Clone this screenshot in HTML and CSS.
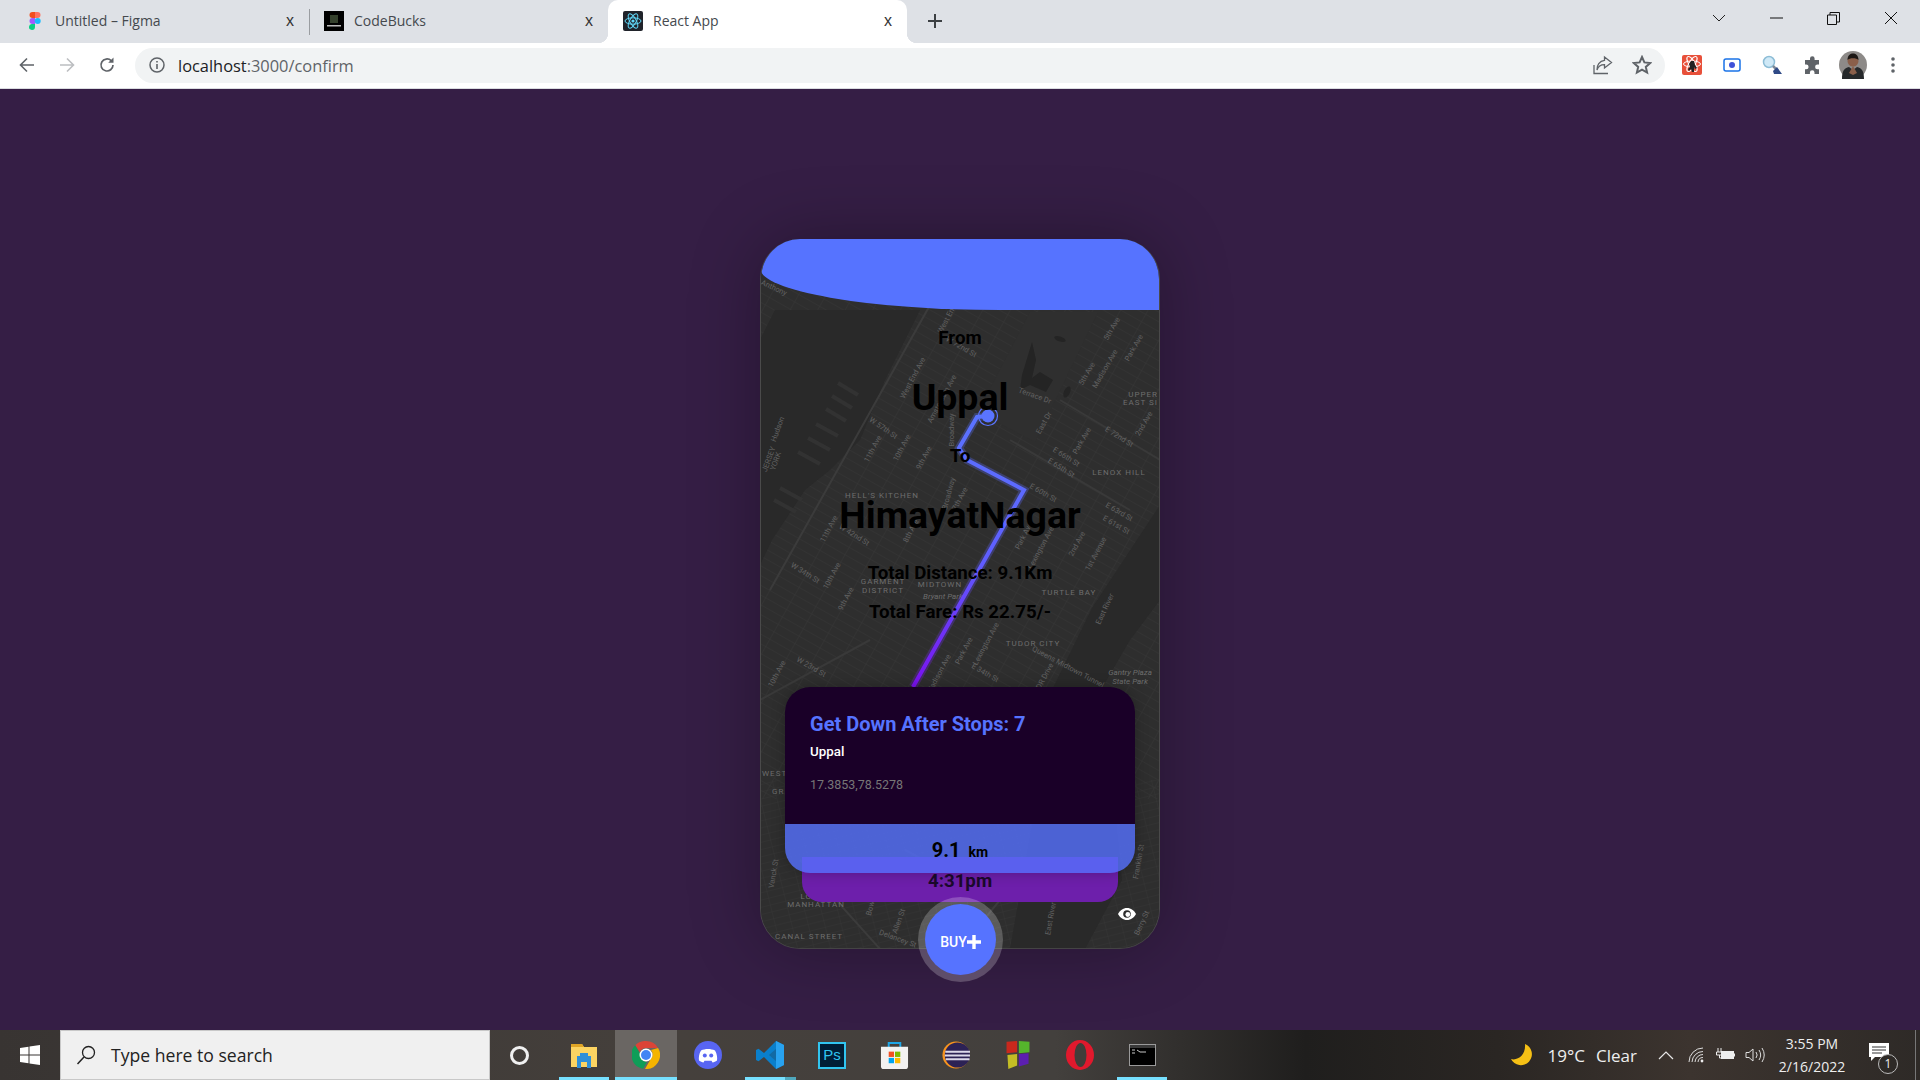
FILE: index.html
```html
<!DOCTYPE html>
<html lang="en">
<head>
    <meta charset="UTF-8">
    <title>React App</title>
    <link rel="stylesheet" href="styles.css">
</head>
<body>

    <div class="tabstrip">
        <div class="tab">
            <svg class="tab-icon" viewBox="0 0 20 20">
                <path fill="#f24e1e" d="M10 1H7.5a3 3 0 0 0 0 6H10z"/>
                <path fill="#ff7262" d="M10 1h2.5a3 3 0 0 1 0 6H10z"/>
                <path fill="#a259ff" d="M10 7H7.5a3 3 0 0 0 0 6H10z"/>
                <circle fill="#1abcfe" cx="12.7" cy="10" r="3"/>
                <path fill="#0acf83" d="M10 13H7.5a3 3 0 1 0 2.5 3z"/>
            </svg>
            <span class="tab-title">Untitled – Figma</span>
            <span class="tab-close">x</span>
        </div>
        <div class="tab tab-sep">
            <svg class="tab-icon" viewBox="0 0 20 20">
                <rect width="20" height="20" fill="#000"/>
                <rect x="6" y="4" width="8" height="8" fill="#34402c"/>
                <rect x="3" y="14" width="14" height="1.5" fill="#bbb"/>
            </svg>
            <span class="tab-title">CodeBucks</span>
            <span class="tab-close">x</span>
        </div>
        <div class="tab tab-active">
            <svg class="tab-icon" viewBox="0 0 20 20">
                <rect width="20" height="20" rx="2" fill="#20232a"/>
                <g fill="none" stroke="#61dafb" stroke-width="1">
                    <ellipse cx="10" cy="10" rx="8" ry="3.2"/>
                    <ellipse cx="10" cy="10" rx="8" ry="3.2" transform="rotate(60 10 10)"/>
                    <ellipse cx="10" cy="10" rx="8" ry="3.2" transform="rotate(120 10 10)"/>
                </g>
                <circle cx="10" cy="10" r="1.6" fill="#61dafb"/>
            </svg>
            <span class="tab-title">React App</span>
            <span class="tab-close">x</span>
        </div>
        <svg class="new-tab" viewBox="0 0 14 14"><path d="M7 0v14M0 7h14" stroke="#3c4043" stroke-width="2"/></svg>

        <div class="window-controls">
            <div class="window-btn"><svg width="14" height="8" viewBox="0 0 14 8"><path d="M1 1l6 6 6-6" fill="none" stroke="#222"/></svg></div>
            <div class="window-btn"><svg width="13" height="2" viewBox="0 0 13 2"><path d="M0 1h13" stroke="#111"/></svg></div>
            <div class="window-btn"><svg width="13" height="13" viewBox="0 0 13 13"><path d="M.5 3h9v9.5h-9zM3 3V.5h9.5V10H10" fill="none" stroke="#111"/></svg></div>
            <div class="window-btn"><svg width="14" height="14" viewBox="0 0 14 14"><path d="M1 1l12 12M13 1L1 13" stroke="#111"/></svg></div>
        </div>
    </div>

    <div class="toolbar">
        <div class="nav-btn">
            <svg width="16" height="16" viewBox="0 0 16 16"><path d="M15 8H2M8 1.5L1.5 8 8 14.5" fill="none" stroke="#5f6368" stroke-width="1.6"/></svg>
        </div>
        <div class="nav-btn">
            <svg width="16" height="16" viewBox="0 0 16 16"><path d="M1 8h13M8 1.5L14.5 8 8 14.5" fill="none" stroke="#bcbec1" stroke-width="1.6"/></svg>
        </div>
        <div class="nav-btn">
            <svg width="18" height="18" viewBox="0 0 18 18"><path d="M15 9a6 6 0 1 1-1.8-4.3" fill="none" stroke="#5f6368" stroke-width="1.7"/><path d="M15.5 1.5v5.3h-5.300z" fill="#5f6368"/></svg>
        </div>

        <div class="omnibox">
            <svg class="info-icon" width="18" height="18" viewBox="0 0 18 18"><circle cx="9" cy="9" r="7" fill="none" stroke="#5f6368" stroke-width="1.5"/><path d="M9 8v5M9 5v1.6" stroke="#5f6368" stroke-width="1.6"/></svg>
            <span class="url">localhost<span class="url-path">:3000/confirm</span></span>
            <svg class="share-icon" width="20" height="20" viewBox="0 0 20 20"><path d="M1 10v8.5h14M11.5 2l7 5.5-7 5.5v-3.300C7 9.700 5 11.800 4 15c-.3-5 2.500-9 7.500-9.600z" fill="none" stroke="#5f6368" stroke-width="1.3"/></svg>
            <svg class="star-icon" width="20" height="20" viewBox="0 0 20 20"><path d="M10 2l2.4 5.4 5.8.6-4.4 3.900 1.300 5.700L10 14.700l-5.100 2.900 1.300-5.700L1.800 8l5.800-.6z" fill="none" stroke="#5f6368" stroke-width="2"/></svg>
        </div>

        <div class="ext-btn">
            <svg width="20" height="20" viewBox="0 0 20 20">
                <rect width="20" height="20" rx="2" fill="#e8503a"/>
                <g fill="none" stroke="#fff" stroke-width="1">
                    <ellipse cx="10" cy="9" rx="8.5" ry="3"/>
                    <ellipse cx="10" cy="9" rx="8.5" ry="3" transform="rotate(60 10 9)"/>
                    <ellipse cx="10" cy="9" rx="8.5" ry="3" transform="rotate(120 10 9)"/>
                </g>
                <path d="M9 6h3l1 4 2 3-2 1-1-2v5h-2l-1-3-2 2-1-2 2-2-1-3z" fill="#222"/>
            </svg>
        </div>
        <div class="ext-btn">
            <svg width="18" height="14" viewBox="0 0 18 14"><rect x="1" y="1" width="16" height="12" rx="2" fill="#fff" stroke="#1a73e8" stroke-width="1.5"/><circle cx="9" cy="7" r="3" fill="#3f51d8"/></svg>
        </div>
        <div class="ext-btn">
            <svg width="20" height="20" viewBox="0 0 20 20"><circle cx="7" cy="7" r="5.5" fill="#cfe9f7" stroke="#8dbdd6" stroke-width="1.5"/><path d="M11 11l3 3" stroke="#7d8a99" stroke-width="2.5"/><path d="M11 16l4-4 5 7-8 0z" fill="#2f4a86"/></svg>
        </div>
        <div class="ext-btn">
            <svg width="19" height="19" viewBox="0 0 19 19"><path d="M7 2.5a2.3 2.3 0 0 1 4.6 0V4H16v4.5h-1.5a2.4 2.4 0 0 0 0 4.8H16V18h-4.5v-1.5a2.3 2.3 0 0 0-4.6 0V18H2v-4.7h1.2a2.4 2.4 0 0 0 0-4.8H2V4h5z" fill="#5f6368"/></svg>
        </div>
        <div class="ext-btn">
            <svg width="28" height="28" viewBox="0 0 28 28">
                <circle cx="14" cy="14" r="14" fill="#8d8a88"/>
                <path d="M3 28c0-8 2-11 7-12l4 3 4-3c5 1 7 4 7 12z" fill="#26292b"/>
                <circle cx="14" cy="10" r="5.5" fill="#8a5f4a"/>
                <path d="M8.5 9c0-5 3-6.5 5.5-6.5S19.5 4 19.5 9c-2-2.5-9-2.5-11 0z" fill="#1c1715"/>
                <path d="M10 22l4-7 4 7-4 2z" fill="#8a5f4a"/>
            </svg>
        </div>
        <div class="ext-btn">
            <svg width="4" height="16" viewBox="0 0 4 16"><circle cx="2" cy="2" r="1.8" fill="#5f6368"/><circle cx="2" cy="8" r="1.8" fill="#5f6368"/><circle cx="2" cy="14" r="1.8" fill="#5f6368"/></svg>
        </div>
    </div>

    <main class="page">
        <div class="phone">
            <div class="screen">
                <svg class="map" viewBox="760 239 400 710">
                    <defs>
                        <pattern id="midtown-grid" width="24" height="8.5" patternUnits="userSpaceOnUse" patternTransform="rotate(29.4)">
                            <path d="M0 0H24M0 0V8.5" stroke="#373737" stroke-width="1" fill="none"/>
                        </pattern>
                        <pattern id="lower-grid" width="16" height="7" patternUnits="userSpaceOnUse" patternTransform="rotate(-14)">
                            <path d="M0 0H16M0 0V7" stroke="#363636" stroke-width="1" fill="none"/>
                        </pattern>
                        <linearGradient id="route-fade" gradientUnits="userSpaceOnUse" x1="988" y1="416" x2="913" y2="687">
                            <stop offset="0" stop-color="#5a74ff"/>
                            <stop offset="0.5" stop-color="#5f5dff"/>
                            <stop offset="1" stop-color="#7a10f0"/>
                        </linearGradient>
                    </defs>

                    <rect x="760" y="239" width="400" height="710" fill="#2e2e2e"/>
                    <rect x="760" y="239" width="400" height="560" fill="url(#midtown-grid)"/>
                    <rect x="760" y="780" width="400" height="170" fill="url(#lower-grid)"/>

                    <!-- water -->
                    <path d="M775 310L920 310 885 380 860 440 830 470 805 490 772 540 760 565V340z" fill="#292929"/>
                    <path d="M1160 505L1092 608 1052 690 1040 780 1010 949H1085L1122 880 1112 780 1092 705 1130 640 1160 600z" fill="#292929"/>

                    <!-- park -->
                    <path d="M1030 312H1098L1035 442 978 412z" fill="#2f2f2f"/>
                    <path d="M1022 375L1032 342 1036 360 1032 378 1040 372 1053 380 1046 392 1030 385 1020 390z" fill="#242424"/>
                    <ellipse cx="1067" cy="392" rx="3" ry="6" fill="#242424" transform="rotate(25 1067 392)"/>
                    <ellipse cx="1060" cy="339" rx="6" ry="2.5" fill="#242424" transform="rotate(20 1060 339)"/>

                    <!-- piers -->
                    <path d="M858 395l-20-12M852 408l-20-12M846 421l-20-12M838 436l-22-12M830 450l-22-12M820 464l-22-12" stroke="#323232" stroke-width="4"/>
                    <path d="M802 500l-22-12M796 512l-22-12" stroke="#323232" stroke-width="4"/>

                    <!-- main roads -->
                    <path d="M930 305L860 430 770 590" stroke="#3b3b3b" stroke-width="2" fill="none"/>
                    <path d="M1060 400L1160 460M1010 440L1130 510M870 640L760 700" stroke="#393939" stroke-width="2" fill="none"/>
                    <path d="M905 850L1000 900 960 949M800 860L880 949" stroke="#3b3b3b" stroke-width="2" fill="none"/>

                    <g class="map-areas">
                        <text x="882" y="498" text-anchor="middle">HELL'S KITCHEN</text>
                        <text x="883" y="584" text-anchor="middle">GARMENT</text>
                        <text x="883" y="593" text-anchor="middle">DISTRICT</text>
                        <text x="940" y="587" text-anchor="middle">MIDTOWN</text>
                        <text x="1069" y="595" text-anchor="middle">TURTLE BAY</text>
                        <text x="1033" y="646" text-anchor="middle">TUDOR CITY</text>
                        <text x="1119" y="475" text-anchor="middle">LENOX HILL</text>
                        <text x="1158" y="397" text-anchor="end">UPPER</text>
                        <text x="1158" y="405" text-anchor="end">EAST SI</text>
                        <text x="816" y="899" text-anchor="middle">LOWER</text>
                        <text x="816" y="907" text-anchor="middle">MANHATTAN</text>
                        <text x="775" y="939">CANAL STREET</text>
                        <text x="762" y="776">WEST</text>
                        <text x="772" y="794">GR</text>
                    </g>

                    <g class="map-streets" text-anchor="middle">
                        <text transform="translate(773 290) rotate(25)">Anthony</text>
                        <text transform="translate(780 430) rotate(-70)">Hudson</text>
                        <text transform="translate(771 460) rotate(-70)">JERSEY</text>
                        <text transform="translate(778 462) rotate(-70)">YORK</text>
                        <text transform="translate(882 430) rotate(35)">W 57th St</text>
                        <text transform="translate(875 450) rotate(-62)">11th Ave</text>
                        <text transform="translate(904 449) rotate(-62)">10th Ave</text>
                        <text transform="translate(926 459) rotate(-62)">9th Ave</text>
                        <text transform="translate(915 379) rotate(-62)">West End Ave</text>
                        <text transform="translate(944 400) rotate(-62)">Amsterdam Ave</text>
                        <text transform="translate(949 320) rotate(-62)">West End</text>
                        <text transform="translate(960 349) rotate(30)">W 72nd St</text>
                        <text transform="translate(1034 398) rotate(20)">Terrace Dr</text>
                        <text transform="translate(1046 424) rotate(-60)">East Dr</text>
                        <text transform="translate(1084 442) rotate(-60)">Park Ave</text>
                        <text transform="translate(1065 459) rotate(32)">E 66th St</text>
                        <text transform="translate(1060 470) rotate(32)">E 65th St</text>
                        <text transform="translate(1118 439) rotate(32)">E 72nd St</text>
                        <text transform="translate(1146 425) rotate(-60)">2nd Ave</text>
                        <text transform="translate(1136 349) rotate(-60)">Park Ave</text>
                        <text transform="translate(1107 370) rotate(-60)">Madison Ave</text>
                        <text transform="translate(1114 330) rotate(-60)">5th Ave</text>
                        <text transform="translate(1089 375) rotate(-60)">5th Ave</text>
                        <text transform="translate(954 430) rotate(-90)">Broadway</text>
                        <text transform="translate(831 530) rotate(-62)">11th Ave</text>
                        <text transform="translate(853 537) rotate(32)">W 42nd St</text>
                        <text transform="translate(834 577) rotate(-62)">10th Ave</text>
                        <text transform="translate(804 575) rotate(32)">W 34th St</text>
                        <text transform="translate(848 600) rotate(-62)">9th Ave</text>
                        <text transform="translate(913 532) rotate(-62)">8th Ave</text>
                        <text transform="translate(951 494) rotate(-75)">Broadway</text>
                        <text transform="translate(962 500) rotate(-62)">7th Ave</text>
                        <text transform="translate(1042 495) rotate(30)">E 60th St</text>
                        <text transform="translate(1118 514) rotate(30)">E 63rd St</text>
                        <text transform="translate(1115 527) rotate(30)">E 61st St</text>
                        <text transform="translate(1079 545) rotate(-62)">2nd Ave</text>
                        <text transform="translate(1098 555) rotate(-62)">1st Avenue</text>
                        <text transform="translate(1026 537) rotate(-62)">Park Ave</text>
                        <text transform="translate(1043 549) rotate(-62)">Lexington Ave</text>
                        <text transform="translate(966 652) rotate(-62)">Park Ave</text>
                        <text transform="translate(988 645) rotate(-62)">Lexington Ave</text>
                        <text transform="translate(941 675) rotate(-62)">Madison Ave</text>
                        <text transform="translate(984 675) rotate(30)">E 34th St</text>
                        <text transform="translate(779 675) rotate(-62)">10th Ave</text>
                        <text transform="translate(810 669) rotate(30)">W 23rd St</text>
                        <text transform="translate(1067 669) rotate(28)">Queens Midtown Tunnel</text>
                        <text transform="translate(1046 679) rotate(-62)">FDR Drive</text>
                        <text transform="translate(776 874) rotate(-80)">Vanck St</text>
                        <text transform="translate(874 904) rotate(-75)">Bowery</text>
                        <text transform="translate(901 922) rotate(-70)">Allen St</text>
                        <text transform="translate(897 941) rotate(20)">Delancey St</text>
                        <text transform="translate(1053 919) rotate(-80)">East River</text>
                        <text transform="translate(1144 924) rotate(-65)">Berry St</text>
                        <text transform="translate(1141 862) rotate(-80)">Franklin St</text>
                        <text transform="translate(1107 610) rotate(-65)">East River</text>
                    </g>
                    <text class="map-italic" x="943" y="599" text-anchor="middle">Bryant Park</text>
                    <text class="map-italic" x="1130" y="675" text-anchor="middle">Gantry Plaza</text>
                    <text class="map-italic" x="1130" y="684" text-anchor="middle">State Park</text>

                    <path class="route-glow" d="M988 416L977 417 959 448 967 460 1024 490 913 687"/>
                    <path class="route-line" d="M988 416L977 417 959 448 967 460 1024 490 913 687"/>
                    <circle cx="988" cy="416" r="6.5" fill="#5a74ff"/>
                    <circle cx="988" cy="416" r="9.5" fill="none" stroke="#5a74ff" stroke-width="1.2"/>
                </svg>

                <div class="screen-top"></div>

                <section class="trip">
                    <h3 class="trip-label">From</h3>
                    <h1 class="trip-place place-from">Uppal</h1>
                    <h3 class="trip-label label-to">To</h3>
                    <h1 class="trip-place place-to">HimayatNagar</h1>
                    <h3 class="trip-label label-distance">Total Distance: 9.1Km</h3>
                    <h3 class="trip-label label-fare">Total Fare: Rs 22.75/-</h3>
                </section>

                <div class="time-card">4:31pm</div>

                <div class="stop-card">
                    <div class="stop-body">
                        <h2 class="stop-title">Get Down After Stops: 7</h2>
                        <p class="stop-name">Uppal</p>
                        <p class="stop-coords">17.3853,78.5278</p>
                    </div>
                    <div class="stop-footer">
                        <span class="stop-km">9.1</span>
                        <span class="stop-unit">km</span>
                    </div>
                </div>

                <svg class="eye" width="18" height="12" viewBox="0 0 18 12">
                    <path d="M9 0C5 0 2 2.5 0 6c2 3.5 5 6 9 6s7-2.5 9-6c-2-3.5-5-6-9-6z" fill="#fff"/>
                    <circle cx="9" cy="6" r="3.8" fill="#2d2d2d"/>
                    <circle cx="9.8" cy="6.5" r="2.4" fill="#fff"/>
                </svg>
            </div>

            <button class="buy-btn">BUY<svg width="14" height="14" viewBox="0 0 14 14"><path d="M7 0v14M0 7h14" stroke="#fff" stroke-width="3.4"/></svg></button>
        </div>
    </main>

    <div class="taskbar">
        <div class="start">
            <svg width="20" height="20" viewBox="0 0 20 20"><path fill="#fff" d="M0 3l8.5-1.2V9.5H0zM9.5 1.600L20 0v9.500H9.500zM0 10.500h8.500v7.700L0 17zM9.500 10.500H20V20L9.500 18.400z"/></svg>
        </div>
        <div class="search">
            <svg width="20" height="20" viewBox="0 0 20 20"><circle cx="12.5" cy="7.5" r="6" fill="none" stroke="#222" stroke-width="1.3"/><path d="M8 12L1.5 19" stroke="#222" stroke-width="1.5"/></svg>
            <span>Type here to search</span>
        </div>
        <div class="cortana"><span class="cortana-ring"></span></div>

        <div class="task-item task-open">
            <svg width="28" height="26" viewBox="0 0 28 26">
                <path d="M1 2h11l2 3h13v20H1z" fill="#fcd462"/>
                <path d="M1 2h11l2 3H1z" fill="#e0a526"/>
                <path d="M7 14h14v12h-4v-6h-6v6H7z" fill="#2f8fd8"/>
                <rect x="10" y="11" width="8" height="3" fill="#2f8fd8"/>
            </svg>
        </div>
        <div class="task-item task-open task-active">
            <svg width="28" height="28" viewBox="0 0 28 28">
                <path d="M14 0a14 14 0 0 1 12.1 7H14a7 7 0 0 0-6.3 4L3.2 4.2A14 14 0 0 1 14 0z" fill="#db4437"/>
                <path d="M3.2 4.2L8.8 14a6 6 0 0 0 6.2 6.9L11 27.7A14 14 0 0 1 3.2 4.2z" fill="#0f9d58"/>
                <path d="M26.1 7A14 14 0 0 1 13 28l6-10.5A6.5 6.5 0 0 0 19 9z" fill="#f4b400"/>
                <circle cx="14" cy="14" r="6.5" fill="#fff"/>
                <circle cx="14" cy="14" r="5" fill="#4285f4"/>
            </svg>
        </div>
        <div class="task-item">
            <svg width="28" height="28" viewBox="0 0 28 28">
                <circle cx="14" cy="14" r="14" fill="#5865f2"/>
                <path d="M7 9.5c4-2 10-2 14 0 2 3.5 2.5 7 2 10-1.5 1.2-3 1.700-4.500 2l-1-1.800h-7l-1 1.800c-1.500-.3-3-.8-4.500-2-.5-3 0-6.500 2-10z" fill="#fff"/>
                <circle cx="10.8" cy="14.5" r="2" fill="#5865f2"/>
                <circle cx="17.2" cy="14.5" r="2" fill="#5865f2"/>
            </svg>
        </div>
        <div class="task-item task-open task-split">
            <svg width="30" height="30" viewBox="0 0 30 30">
                <path d="M21 1l8 4v20l-8 4L9 17l-5.5 4.3L1 20V10l2.5-1.3L9 13z" fill="#0a7fcb"/>
                <path d="M21 1l8 4v20l-8 4z" fill="#28a2ef"/>
                <path d="M21 9l-7 6 7 6z" fill="#2d2d2d" fill-opacity=".25"/>
            </svg>
        </div>
        <div class="task-item">
            <div class="ps-icon">Ps</div>
        </div>
        <div class="task-item">
            <svg width="29" height="29" viewBox="0 0 30 30">
                <path d="M9 7V2h12v5" fill="none" stroke="#1ea7e8" stroke-width="2"/>
                <path d="M1 6h28v20a3 3 0 0 1-3 3H4a3 3 0 0 1-3-3z" fill="#f3f2f1"/>
                <rect x="9" y="11" width="5.5" height="5.5" fill="#f25022"/>
                <rect x="15.5" y="11" width="5.5" height="5.5" fill="#7fba00"/>
                <rect x="9" y="17.5" width="5.5" height="5.5" fill="#00a4ef"/>
                <rect x="15.5" y="17.5" width="5.5" height="5.5" fill="#ffb900"/>
            </svg>
        </div>
        <div class="task-item">
            <svg width="30" height="28" viewBox="0 0 30 30">
                <circle cx="15" cy="15" r="14.5" fill="#f7941e"/>
                <circle cx="16.5" cy="15" r="13.5" fill="#2c2255"/>
                <path d="M3.5 10.5h26.5v2H3.5zM3 14.5h27v2H3zM4 18.5h25.5v2H4z" fill="#dcd9ea"/>
            </svg>
        </div>
        <div class="task-item">
            <svg width="28" height="30" viewBox="0 0 28 34">
                <path d="M1 2l12-1v13L1 15z" fill="#c9281d"/>
                <path d="M15 1l12 1v12l-12 1z" fill="#55b52c"/>
                <path d="M2 17l11-1v13L3 33z" fill="#c3bd25"/>
                <path d="M15 16l11-1 0 12-11 3z" fill="#5c1fb0"/>
            </svg>
        </div>
        <div class="task-item">
            <svg width="28" height="30" viewBox="0 0 28 30">
                <ellipse cx="14" cy="15" rx="14" ry="15" fill="#e1192d"/>
                <ellipse cx="14.5" cy="15" rx="6" ry="12" fill="#413d3a"/>
            </svg>
        </div>
        <div class="task-item task-open">
            <svg width="27" height="22" viewBox="0 0 27 22">
                <rect x=".5" y=".5" width="26" height="21" fill="#000" stroke="#9a9a9a"/>
                <rect x="1" y="1" width="25" height="3" fill="#3a3a3a"/>
                <path d="M3 6h3M3 9h3M8 6l3 2M11 8h6" stroke="#c8c8c8"/>
            </svg>
        </div>

        <div class="tray">
            <svg class="moon" width="24" height="24" viewBox="0 0 24 24"><path d="M15 1a11 11 0 1 1-14 15c7 2 15-4 14-15z" fill="#f6c015"/></svg>
            <span class="weather-temp">19°C</span>
            <span class="weather-text">Clear</span>
            <svg class="tray-caret" width="16" height="9" viewBox="0 0 16 9"><path d="M1 8l7-7 7 7" fill="none" stroke="#e8e8e8" stroke-width="1.2"/></svg>
            <svg class="tray-wifi" width="17" height="16" viewBox="0 0 17 16"><path d="M1 15a14 14 0 0 1 14-14M4 15A11 11 0 0 1 15 4.5M7 15a8 8 0 0 1 8-7.5M10 15a5 5 0 0 1 5-4.5" fill="none" stroke="#ddd"/><circle cx="14" cy="14" r="1.4" fill="#eee"/></svg>
            <svg class="tray-power" width="20" height="14" viewBox="0 0 20 14"><path d="M3 0v4M6 0v4M1.5 4h6v3h-6zM4.5 7v3H7" stroke="#eee" fill="none"/><rect x="6" y="3" width="13" height="8" fill="#eee"/><path d="M19 5.5h1v3h-1z" fill="#eee"/></svg>
            <svg class="tray-sound" width="20" height="16" viewBox="0 0 20 16"><path d="M1 5.5h3L8 2v12L4 10.5H1z" fill="none" stroke="#ddd"/><path d="M11 5a5 5 0 0 1 0 6M14 3a9 9 0 0 1 0 10M17 1a13 13 0 0 1 0 14" fill="none" stroke="#ddd"/></svg>
            <div class="clock">
                <span>3:55 PM</span>
                <span>2/16/2022</span>
            </div>
            <div class="notify">
                <svg width="20" height="18" viewBox="0 0 20 18"><path d="M0 0h20v14H6l-4 4v-4H0z" fill="#fff"/><path d="M3 4h14M3 7h14M3 10h10" stroke="#333"/></svg>
                <span class="notify-count">1</span>
            </div>
        </div>
    </div>

</body>
</html>
```

FILE: styles.css
```css
* {
    box-sizing: border-box;
}

body {
    margin: 0;
    height: 1080px;
    overflow: hidden;
    display: flex;
    flex-direction: column;
    background-color: #351e45;
    font-family: Roboto, sans-serif;
}

/* browser chrome */
.tabstrip {
    height: 43px;
    flex: none;
    display: flex;
    align-items: stretch;
    padding-left: 10px;
    background-color: #dee1e6;
    font-family: "Open Sans", sans-serif;
    font-size: 14px;
    color: #45494e;
}

.tab {
    position: relative;
    width: 299px;
    display: flex;
    align-items: center;
    padding: 0 12px 2px 15px;
}

.tab-sep::before {
    content: "";
    position: absolute;
    left: 0;
    top: 9px;
    bottom: 8px;
    width: 1px;
    background-color: #9a9da1;
}

.tab-active {
    background-color: #fff;
    border-radius: 10px 10px 0 0;
}

.tab-active::before,
.tab-active::after {
    content: "";
    position: absolute;
    bottom: 0;
    width: 10px;
    height: 10px;
}

.tab-active::before {
    left: -10px;
    background: radial-gradient(circle at 0 0, #dee1e6 10px, #fff 10.5px);
}

.tab-active::after {
    right: -10px;
    background: radial-gradient(circle at 100% 0, #dee1e6 10px, #fff 10.5px);
}

.tab-icon {
    width: 20px;
    height: 20px;
    flex: none;
}

.tab-title {
    margin-left: 10px;
}

.tab-close {
    margin-left: auto;
    width: 14px;
    text-align: center;
    font-family: "Liberation Sans", sans-serif;
    font-size: 16px;
    color: #333;
}

.new-tab {
    width: 14px;
    height: 14px;
    margin: 14px 0 0 21px;
}

.window-controls {
    margin-left: auto;
    display: flex;
}

.window-btn {
    width: 57.5px;
    height: 36px;
    display: flex;
    align-items: center;
    justify-content: center;
}

.toolbar {
    height: 46px;
    flex: none;
    display: flex;
    align-items: center;
    padding: 0 7px 1px;
    background-color: #fff;
    border-bottom: 1px solid #dadce0;
}

.nav-btn {
    width: 40px;
    display: flex;
    justify-content: center;
}

.omnibox {
    flex: 1;
    height: 35px;
    margin: 0 7px 0 8px;
    padding: 0 13px;
    display: flex;
    align-items: center;
    background-color: #f1f3f4;
    border-radius: 18px;
}

.url {
    margin-left: 12px;
    font-family: "Open Sans", sans-serif;
    font-size: 16.4px;
    color: #202124;
}

.url-path {
    color: #5f6368;
}

.share-icon {
    margin-left: auto;
}

.star-icon {
    margin-left: 19px;
}

.ext-btn {
    width: 40.2px;
    display: flex;
    justify-content: center;
    align-items: center;
}

/* confirm page */
.page {
    flex: 1;
    display: flex;
    justify-content: center;
    padding-top: 150px;
}

.phone {
    position: relative;
    width: 400px;
    height: 710px;
    box-shadow: 0 0 70px rgba(0, 0, 0, 0.3);
    border-radius: 40px;
}

.screen {
    position: relative;
    height: 100%;
    overflow: hidden;
    border-radius: 40px;
    background-color: #2d2d2d;
    border-left: 1px solid #4a4a4a;
    border-right: 1px solid #4a4a4a;
    border-bottom: 1px solid #444;
}

.map {
    position: absolute;
    left: -1px;
    top: 0;
    width: 400px;
    height: 710px;
}

.map-areas text {
    font-family: Roboto, sans-serif;
    font-size: 8px;
    letter-spacing: 1px;
    fill: #6d6d6d;
}

.map-streets text {
    font-family: Roboto, sans-serif;
    font-size: 7.5px;
    fill: #626262;
}

.map-italic {
    font-family: Roboto, sans-serif;
    font-size: 8px;
    font-style: italic;
    fill: #6d6d6d;
}

.route-line,
.route-glow {
    fill: none;
    stroke: url(#route-fade);
    stroke-linejoin: miter;
}

.route-line {
    stroke-width: 4;
}

.route-glow {
    stroke-width: 8;
    opacity: 0.3;
}

.screen-top {
    position: relative;
    height: 71px;
    margin: 0 -1px;
    background-color: #5673ff;
    border-bottom-left-radius: 240px 42px;
}

.trip {
    position: relative;
    padding-top: 18px;
    text-align: center;
    color: #000;
}

.trip-label {
    margin: 0;
    font-size: 18.72px;
    line-height: 21px;
    font-weight: 700;
}

.trip-place {
    margin: 0;
    font-size: 37.44px;
    line-height: 42px;
    font-weight: 700;
}

.place-from {
    margin-top: 27px;
}

.label-to {
    margin-top: 28px;
}

.place-to {
    margin-top: 27px;
}

.label-distance {
    margin-top: 27px;
}

.label-fare {
    margin-top: 18px;
}

.stop-card {
    position: absolute;
    left: 24px;
    top: 448px;
    width: 350px;
    height: 186px;
    display: flex;
    flex-direction: column;
    border-radius: 25px;
    overflow: hidden;
    box-shadow: 0 0 14px rgba(0, 0, 0, 0.25);
}

.stop-body {
    height: 137px;
    flex: none;
    padding: 26px 25px 0;
    background-color: #1a0028;
}

.stop-title {
    margin: 0;
    font-size: 20px;
    line-height: 22px;
    font-weight: 700;
    color: #5673ff;
}

.stop-name {
    margin: 9px 0 0;
    font-size: 13.33px;
    line-height: 15px;
    font-weight: 500;
    color: #fff;
}

.stop-coords {
    margin: 19px 0 0;
    font-size: 12.48px;
    line-height: 14px;
    color: #777;
}

.stop-footer {
    flex: 1;
    padding-top: 14px;
    text-align: center;
    background-color: rgba(85, 112, 255, 0.8);
    color: #000;
    font-weight: 700;
}

.stop-km {
    font-size: 20px;
    margin-right: 4px;
}

.stop-unit {
    font-size: 14px;
}

.time-card {
    position: absolute;
    left: 41px;
    top: 618px;
    width: 316px;
    height: 45px;
    padding-top: 14px;
    text-align: center;
    border-radius: 0 0 20px 20px;
    background-color: #6d1fab;
    font-size: 18.72px;
    line-height: 21px;
    font-weight: 700;
    color: #1b0a2c;
}

.eye {
    position: absolute;
    left: 357px;
    top: 669px;
}

.buy-btn {
    position: absolute;
    left: 165px;
    top: 665px;
    width: 71px;
    height: 71px;
    padding: 4px 0 0;
    display: flex;
    align-items: center;
    justify-content: center;
    border: none;
    border-radius: 50%;
    background-color: #5673ff;
    box-shadow: 0 0 0 7px rgba(255, 255, 255, 0.22);
    color: #fff;
    font-family: Roboto, sans-serif;
    font-size: 14px;
    font-weight: 500;
}

/* windows taskbar */
.taskbar {
    height: 50px;
    flex: none;
    display: flex;
    align-items: center;
    background: linear-gradient(90deg, #383432 0, #45403c 35%, #43403d 55%, #1f1e1d 68%, #2a2623 78%, #3c342f 88%, #2e2a27 100%);
    color: #eee;
    font-family: "Open Sans", sans-serif;
}

.start {
    width: 60px;
    display: flex;
    justify-content: center;
}

.search {
    width: 430px;
    height: 50px;
    display: flex;
    align-items: center;
    gap: 15px;
    padding-left: 15px;
    background-color: #f0f0f0;
    border: 1px solid #c8c8c8;
    color: #222;
    font-size: 17.6px;
}

.cortana {
    width: 63px;
    padding-right: 5px;
    display: flex;
    justify-content: center;
}

.cortana-ring {
    width: 19px;
    height: 19px;
    border: 3px solid #f0f0f0;
    border-radius: 50%;
}

.task-item {
    position: relative;
    width: 62px;
    height: 50px;
    display: flex;
    align-items: center;
    justify-content: center;
}

.task-open::after {
    content: "";
    position: absolute;
    left: 6px;
    right: 6px;
    bottom: 0;
    height: 3px;
    background-color: #76e0ff;
}

.task-active {
    background-color: #6a6663;
}

.task-active::after {
    left: 0;
    right: 0;
}

.task-split::after {
    right: 5px;
    background: linear-gradient(90deg, #76e0ff 78%, #4fa8bd 78%);
}

.ps-icon {
    width: 28px;
    height: 27px;
    padding-top: 2px;
    background-color: #001e36;
    border: 2px solid #31c5f0;
    color: #31c5f0;
    font-family: "Liberation Sans", sans-serif;
    font-size: 15px;
    text-align: center;
}

.tray {
    margin-left: auto;
    padding-right: 4px;
    display: flex;
    align-items: center;
    font-size: 17px;
}

.weather-temp {
    margin-left: 14px;
}

.weather-text {
    margin-left: 11px;
}

.tray-caret {
    margin-left: 21px;
}

.tray-wifi {
    margin-left: 14px;
}

.tray-power {
    margin-left: 10px;
}

.tray-sound {
    margin-left: 10px;
}

.clock {
    margin-left: 10px;
    width: 74px;
    display: flex;
    flex-direction: column;
    align-items: center;
    gap: 4px;
    font-size: 14px;
    line-height: 19px;
}

.notify {
    position: relative;
    width: 47px;
    margin-left: 20px;
    height: 50px;
    display: flex;
    align-items: center;
    border-right: 1px solid #777;
    padding-bottom: 6px;
}

.notify-count {
    position: absolute;
    left: 9px;
    top: 24px;
    width: 20px;
    height: 20px;
    line-height: 17px;
    text-align: center;
    font-size: 12px;
    border: 1px solid #bbb;
    border-radius: 50%;
    background-color: #2e2a27;
}
```
